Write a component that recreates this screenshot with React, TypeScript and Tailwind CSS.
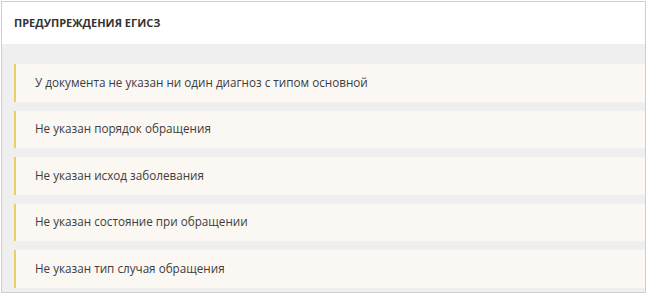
const warnings = [
  "У документа не указан ни один диагноз с типом основной",
  "Не указан порядок обращения",
  "Не указан исход заболевания",
  "Не указан состояние при обращении",
  "Не указан тип случая обращения",
];

export default function App() {
  return (
    <div className="h-[294px] w-[647px] bg-white p-px font-['Open_Sans',sans-serif]">
      <div className="flex h-[292px] w-[645px] flex-col border border-[#cfcfcf]">
        <div className="flex h-[42px] shrink-0 items-center px-3 pt-px text-[11px] font-bold uppercase text-[#333]">
          Предупреждения ЕГИСЗ
        </div>
        <div className="flex flex-1 flex-col gap-[9px] bg-[#efefef] pl-3 pt-[20px]">
          {warnings.map((text) => (
            <div
              key={text}
              className="flex h-[37.5px] shrink-0 items-center border-l-2 border-[#e8d063] bg-[#fbf8f3] pl-[19px] text-[11.7px] text-[#3d3d3d]"
            >
              {text}
            </div>
          ))}
        </div>
      </div>
    </div>
  );
}
